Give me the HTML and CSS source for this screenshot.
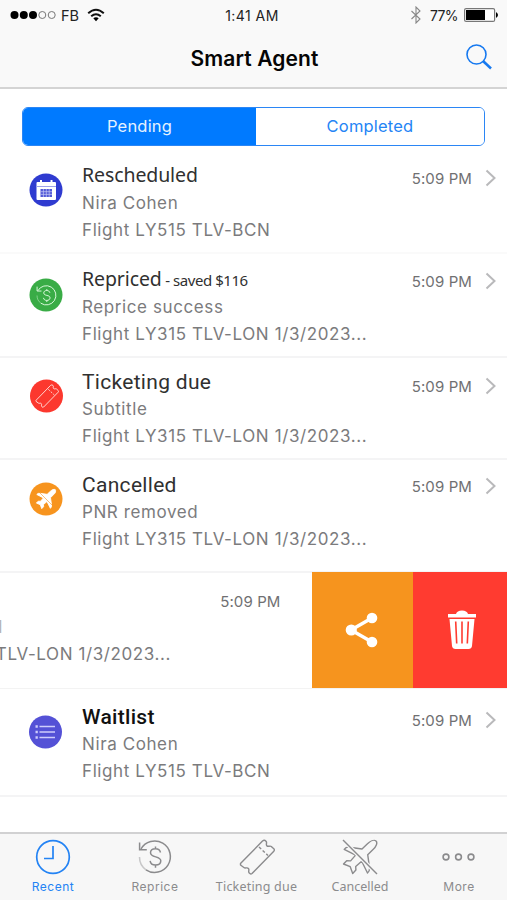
FILE: index.html
```html
<!DOCTYPE html>
<html lang="en">
<head>
<meta charset="utf-8">
<title>Smart Agent</title>
<link rel="stylesheet" href="styles.css">
</head>
<body>
<svg class="defs" aria-hidden="true">
  <symbol id="chevron" viewBox="0 0 12 18"><path d="M1.500 1.500 9.500 9l-8 7.500" fill="none" stroke="#b9b9bb" stroke-width="2"/></symbol>
  <symbol id="reprice" viewBox="0 0 36 36"><g fill="none" stroke="currentColor" stroke-width="1.500"><path d="M4 10A15.700 15.700 0 1 1 9 30.800" /><path d="M9 30.800A15.700 15.700 0 0 1 2.500 18" opacity=".45"/><path d="M2.600 3.500v7.200h7.200" /><path d="M23.500 13.500c-.5-2.300-2.400-3.700-5-3.700-3 0-5 1.600-5 4 0 5.400 10.300 2.800 10.300 8 0 2.600-2.200 4.300-5.300 4.300s-5-1.600-5.400-4.200M18.500 7.500v2.300M18.500 26.200v2.500"/></g></symbol>
  <symbol id="ticket" viewBox="0 0 36 36"><g fill="none" stroke="currentColor" stroke-width="1.400" stroke-linejoin="round"><path d="M1.500 24.500 23.500 2q1.800-1.500 3.500.2c1.500 1.500-.5 3 .8 4.500s3.200-.3 4.500.8l2.500 2.300q1.200 1.200 0 2.400L13 34.500q-1.400 1-2.700-.4c-1.600-1.700.5-3.200-.9-4.700s-3 .5-4.500-.9L1.500 26z"/><path d="m20 8 9 8.500" stroke-dasharray="3 2"/></g></symbol>
  <symbol id="plane" viewBox="0 0 36 36"><path d="M34 2c2 2-.2 6-2.700 8.300l-5.600 5.400 1.800 12.600q.5 3.700-2 5.700l-5.800-11.700-6 5.200.2 3.600-3.200 3.400-2.500-6.800L1.500 25l3.200-3.300 3.900.2 5-5.800L2.200 10.300q2-2.700 5.400-2.100l12.400 1.800 5.500-5.200C28 2.400 32 .2 34 2z" stroke-linejoin="round"/></symbol>
</svg>
<main class="screen">
  <header class="top">
    <div class="status">
      <div class="carrier">
        <svg class="signal" viewBox="0 0 47 10"><g><circle cx="4.500" cy="5" r="4"/><circle cx="13.800" cy="5" r="4"/><circle cx="23" cy="5" r="4"/></g><g fill="none" stroke="#777"><circle cx="32.300" cy="5" r="3.500"/><circle cx="41.700" cy="5" r="3.500"/></g></svg>
        <span class="network">FB</span>
        <svg class="wifi" viewBox="0 0 18 14"><g fill="none" stroke="#111" stroke-width="2"><path d="M1.200 5.300Q9-1.700 16.800 5.300M4.200 8.300q4.800-4.200 9.600 0"/></g><path d="M6.300 10.300Q9 8.200 11.700 10.300L9 13.200z"/></svg>
      </div>
      <span class="clock">1:41 AM</span>
      <div class="power">
        <svg class="bluetooth" viewBox="0 0 12 18"><path d="m1.500 5 8.500 8-4 4V1l4 4-8.500 8" fill="none" stroke="#888" stroke-width="1.100"/></svg>
        <span class="percent">77%</span>
        <svg class="battery" viewBox="0 0 35 14"><rect x=".6" y=".6" width="30" height="12.800" rx="1.500" fill="#fff" stroke="#777" stroke-width="1.200"/><path d="M2 2h19v10H2z"/><path d="M32 4q4 3 0 6z"/></svg>
      </div>
    </div>
    <div class="navbar">
      <h1>Smart Agent</h1>
      <svg class="search" viewBox="0 0 26 26"><g fill="none" stroke="#1679f0"><circle cx="10.500" cy="10.500" r="9.500" stroke-width="1.600"/><path d="m17 17 8 7.500" stroke-width="2.500"/></g></svg>
    </div>
  </header>
  <div class="segmented"><button class="segment selected"><span class="pending">Pending</span></button><button class="segment"><span class="completed">Completed</span></button></div>
  <section class="list">
    <article class="row rescheduled">
      <svg class="badge" viewBox="0 0 34 34"><circle cx="17" cy="17" r="16.500" fill="#2f3bd0"/><rect x="7.500" y="9" width="19.500" height="18" rx="1" fill="#fff"/><path d="M7.500 13.500h19.500" stroke="#9da2ea"/><path d="M12 7v4M22.500 7v4" stroke="#fff" stroke-width="2"/><path d="M11.500 16h11.500v8H11.500z" fill="#5059d7"/><path d="M14.400 16v8M17.300 16v8M20.200 16v8M11.500 18.700h11.500M11.500 21.400h11.500" stroke="#c5c8f3" stroke-width=".7"/></svg>
      <div class="copy"><h2 class="humanist">Rescheduled</h2><p>Nira Cohen</p><p>Flight LY515 TLV-BCN</p></div>
      <div class="meta"><time>5:09 PM</time><svg class="chevron"><use href="#chevron"/></svg></div>
    </article>
    <article class="row repriced">
      <svg class="badge" viewBox="0 0 34 34"><circle cx="17" cy="17" r="16.500" fill="#39ac46"/><g color="#e8ffe8"><use href="#reprice" x="6.500" y="6.500" width="22" height="22"/></g></svg>
      <div class="copy"><h2 class="humanist">Repriced<small> - saved $116</small></h2><p>Reprice success</p><p>Flight LY315 TLV-LON 1/3/2023...</p></div>
      <div class="meta"><time>5:09 PM</time><svg class="chevron"><use href="#chevron"/></svg></div>
    </article>
    <article class="row ticketing">
      <svg class="badge" viewBox="0 0 34 34"><circle cx="17.500" cy="17" r="16.500" fill="#fc382e"/><g color="#ffe1dc"><use href="#ticket" x="6" y="5" width="24" height="24"/></g></svg>
      <div class="copy"><h2>Ticketing due</h2><p>Subtitle</p><p>Flight LY315 TLV-LON 1/3/2023...</p></div>
      <div class="meta"><time>5:09 PM</time><svg class="chevron"><use href="#chevron"/></svg></div>
    </article>
    <article class="row cancelled">
      <svg class="badge" viewBox="0 0 34 34"><circle cx="17" cy="17" r="16.500" fill="#f7941e"/><use href="#plane" x="6.500" y="6.500" width="21" height="21" fill="#fff" stroke="#fff" stroke-width="1.500"/><path d="m7 7 20 20" stroke="#f7941e" stroke-width=".6"/></svg>
      <div class="copy"><h2>Cancelled</h2><p>PNR removed</p><p>Flight LY315 TLV-LON 1/3/2023...</p></div>
      <div class="meta"><time>5:09 PM</time><svg class="chevron"><use href="#chevron"/></svg></div>
    </article>
    <article class="swiped">
      <div class="remainder"><time>5:09 PM</time><p class="clipped"><span>PNR removed</span></p><p class="clipped"><span>Flight LY315 TLV-LON 1/3/2023...</span></p></div>
      <button class="share" aria-label="Share"><svg viewBox="0 0 34 36"><path d="M27 6 6 18l21 12" fill="none" stroke="#fff" stroke-width="3.500"/><g fill="#fff"><circle cx="27" cy="6" r="5.300"/><circle cx="6.300" cy="18" r="5.600"/><circle cx="27" cy="30" r="5.300"/></g></svg></button>
      <button class="delete" aria-label="Delete"><svg viewBox="0 0 30 40"><g fill="#fff"><path d="M1 4h8q1-3.500 6-3.500T21 4h8v3.500H1z"/><path d="M2.500 9h25L25 36q-.5 3-3.500 3h-13Q5.500 39 5 36z"/></g><path d="m8.700 11.500 1 22M15 11.500v22M21.300 11.500l-1 22" stroke="#ff3b30" stroke-width="1.600"/></svg></button>
    </article>
    <article class="row waitlist">
      <svg class="badge" viewBox="0 0 34 34"><circle cx="16.500" cy="17" r="16.500" fill="#5451d6"/><g stroke="#cecdfc" stroke-width="1.700"><path d="M10.500 11.500H26M10.500 17H26M10.500 22.500H26"/><path d="M6.500 11.500h2.300M6.500 17h2.300M6.500 22.500h2.300" stroke-width="2.300"/></g></svg>
      <div class="copy"><h2>Waitlist</h2><p>Nira Cohen</p><p>Flight LY515 TLV-BCN</p></div>
      <div class="meta"><time>5:09 PM</time><svg class="chevron"><use href="#chevron"/></svg></div>
    </article>
  </section>
  <nav class="tabs">
    <a class="tab recent"><svg viewBox="0 0 36 36"><g fill="none" stroke="currentColor" stroke-width="1.700"><circle cx="18" cy="18" r="16.300"/><path d="M18 7v12.500H9"/></g></svg><span>Recent</span></a>
    <a class="tab reprice"><svg><use href="#reprice"/></svg><span>Reprice</span></a>
    <a class="tab due"><svg><use href="#ticket"/></svg><span>Ticketing due</span></a>
    <a class="tab cancel"><svg viewBox="0 0 36 36"><use href="#plane" fill="none" stroke="currentColor" stroke-width="1.400" width="36" height="36"/><path d="m1 1 34 34" stroke="#f7f7f7" stroke-width="4"/><path d="m1 1 34 34" stroke="currentColor" stroke-width="1.400"/></svg><span>Cancelled</span></a>
    <a class="tab more"><svg viewBox="0 0 36 36"><g fill="none" stroke="currentColor" stroke-width="1.600"><circle cx="5" cy="18" r="2.900"/><circle cx="17.500" cy="18" r="2.900"/><circle cx="30" cy="18" r="2.900"/></g></svg><span>More</span></a>
  </nav>
</main>
</body>
</html>
```
FILE: styles.css
```css
* { box-sizing: border-box; }
body { margin: 0; background: #fff; font-family: Inter, Roboto, "Liberation Sans", sans-serif; }
h1, h2, p { margin: 0; font-weight: 400; white-space: nowrap; }
button { border: 0; padding: 0; font: inherit; }
svg { display: block; flex: none; }
.defs { display: none; }
.screen { width: 507px; height: 900px; overflow: hidden; display: flex; flex-direction: column; }
.top { height: 89px; flex: none; background: #f9f9f9; border-bottom: 2px solid #d4d4d4; }
.status { height: 30px; display: grid; grid-template-columns: 1fr auto 1fr; align-items: center; padding: 0 8px 0 10px; color: #222; font-size: 14px; }
.carrier, .power { display: flex; align-items: center; }
.power { justify-content: flex-end; }
.signal { width: 47px; height: 10px; }
.network { margin-left: 4px; font-size: 14.500px; }
.wifi { width: 18px; height: 14px; margin-left: 8px; }
.clock { font-size: 14px; letter-spacing: .45px; padding-right: 5px; }
.bluetooth { width: 12px; height: 18px; margin-right: 8px; }
.percent { font-size: 14px; letter-spacing: -.6px; }
.battery { width: 35px; height: 14px; margin-left: 6px; }
.navbar { height: 57px; display: grid; grid-template-columns: 1fr auto 1fr; align-items: center; padding-right: 15px; }
h1 { grid-column: 2; font-size: 21px; font-weight: 600; letter-spacing: .1px; color: #050505; padding-left: 17px; }
.search { width: 26px; height: 26px; justify-self: end; margin-top: -4px; }
.segmented { flex: none; width: 463px; height: 39px; margin: 18px 0 0 22px; display: grid; grid-template-columns: 233px 1fr; border: 1.500px solid #2b86f5; border-radius: 6px; overflow: hidden; }
.segment { background: #fff; color: #2484f5; font-size: 16.500px; letter-spacing: .2px; line-height: 35px; }
.segment.selected { background: #007aff; color: #e5f2ff; }
.list { flex: none; margin-top: 3px; }
.row { display: grid; grid-template-columns: 53px 1fr auto; border-bottom: 2px solid #f4f4f5; padding: 13px 9px 0 29px; }
.rescheduled { height: 105px; border-bottom-color: #fafafa; }
.repriced { height: 104px; padding-top: 12px; }
.ticketing { height: 102px; padding-top: 11px; }
.cancelled { height: 113px; padding-top: 12px; }
.waitlist { height: 107px; padding-top: 14px; }
.badge { width: 34px; height: 34px; margin-top: 11px; }
.repriced .badge { margin-top: 12px; }
.ticketing .badge, .cancelled .badge { margin-top: 10px; }
.copy { margin-top: -1px; }
h2 { color: #303030; font-family: Roboto, sans-serif; font-size: 21px; letter-spacing: .3px; line-height: 29px; height: 29px; }
h2.humanist { font-family: "Noto Sans", "Open Sans", sans-serif; font-size: 19.500px; letter-spacing: -.1px; line-height: 27px; }
.ticketing h2, .cancelled h2 { margin-bottom: -1px; }
h2 small { font-size: 15px; letter-spacing: -.45px; }
p { color: #7b7b7d; font-size: 17px; line-height: 27px; letter-spacing: .6px; }
.waitlist h2 { color: #111; font-weight: 500; margin-bottom: -1px; }
.meta { display: flex; align-items: center; gap: 13px; height: 20px; margin-top: 7px; padding-right: 1px; }
.repriced .meta { margin-top: 6px; }
.ticketing .meta { margin-top: 8px; }
.cancelled .meta { margin-top: 5px; }
time { font-size: 15px; letter-spacing: .1px; line-height: 20px; color: #707072; white-space: nowrap; }
.chevron { width: 12px; height: 18px; margin-top: -3px; }
.swiped { display: grid; grid-template-columns: 311.500px 101px 94.500px; height: 117px; border-bottom: 1px solid #f3f3f3; margin-top: -1px; margin-bottom: 1px; }
.remainder { padding-top: 20px; overflow: hidden; display: flex; flex-direction: column; }
.remainder time { align-self: flex-end; margin-right: 31px; margin-bottom: 2px; }
.clipped { display: flex; justify-content: flex-end; width: 171px; }
.clipped:first-of-type { width: 3px; color: #b5b5b7; }
.share, .delete { display: flex; align-items: center; justify-content: center; }
.share { background: #f6941e; }
.share svg { width: 34px; height: 36px; }
.delete { background: #ff3b30; padding-left: 4px; }
.delete svg { width: 30px; height: 40px; }
.tabs { margin-top: auto; height: 68px; flex: none; border-top: 2px solid #d1d1d2; background: #f7f7f7; display: grid; grid-template-columns: 106px 98px 105px 102px 96px; color: #8b8b8d; }
.tab { display: flex; flex-direction: column; align-items: center; padding-top: 5px; }
.tab svg { width: 36px; height: 36px; }
.tab span { font-size: 12px; letter-spacing: .5px; line-height: 18px; margin-top: 3px; white-space: nowrap; }
.recent { color: #2383f4; }
.due span, .cancel span { font-family: "Noto Sans", sans-serif; font-size: 12.500px; letter-spacing: .2px; }
.cancel span { letter-spacing: 0; }
```
